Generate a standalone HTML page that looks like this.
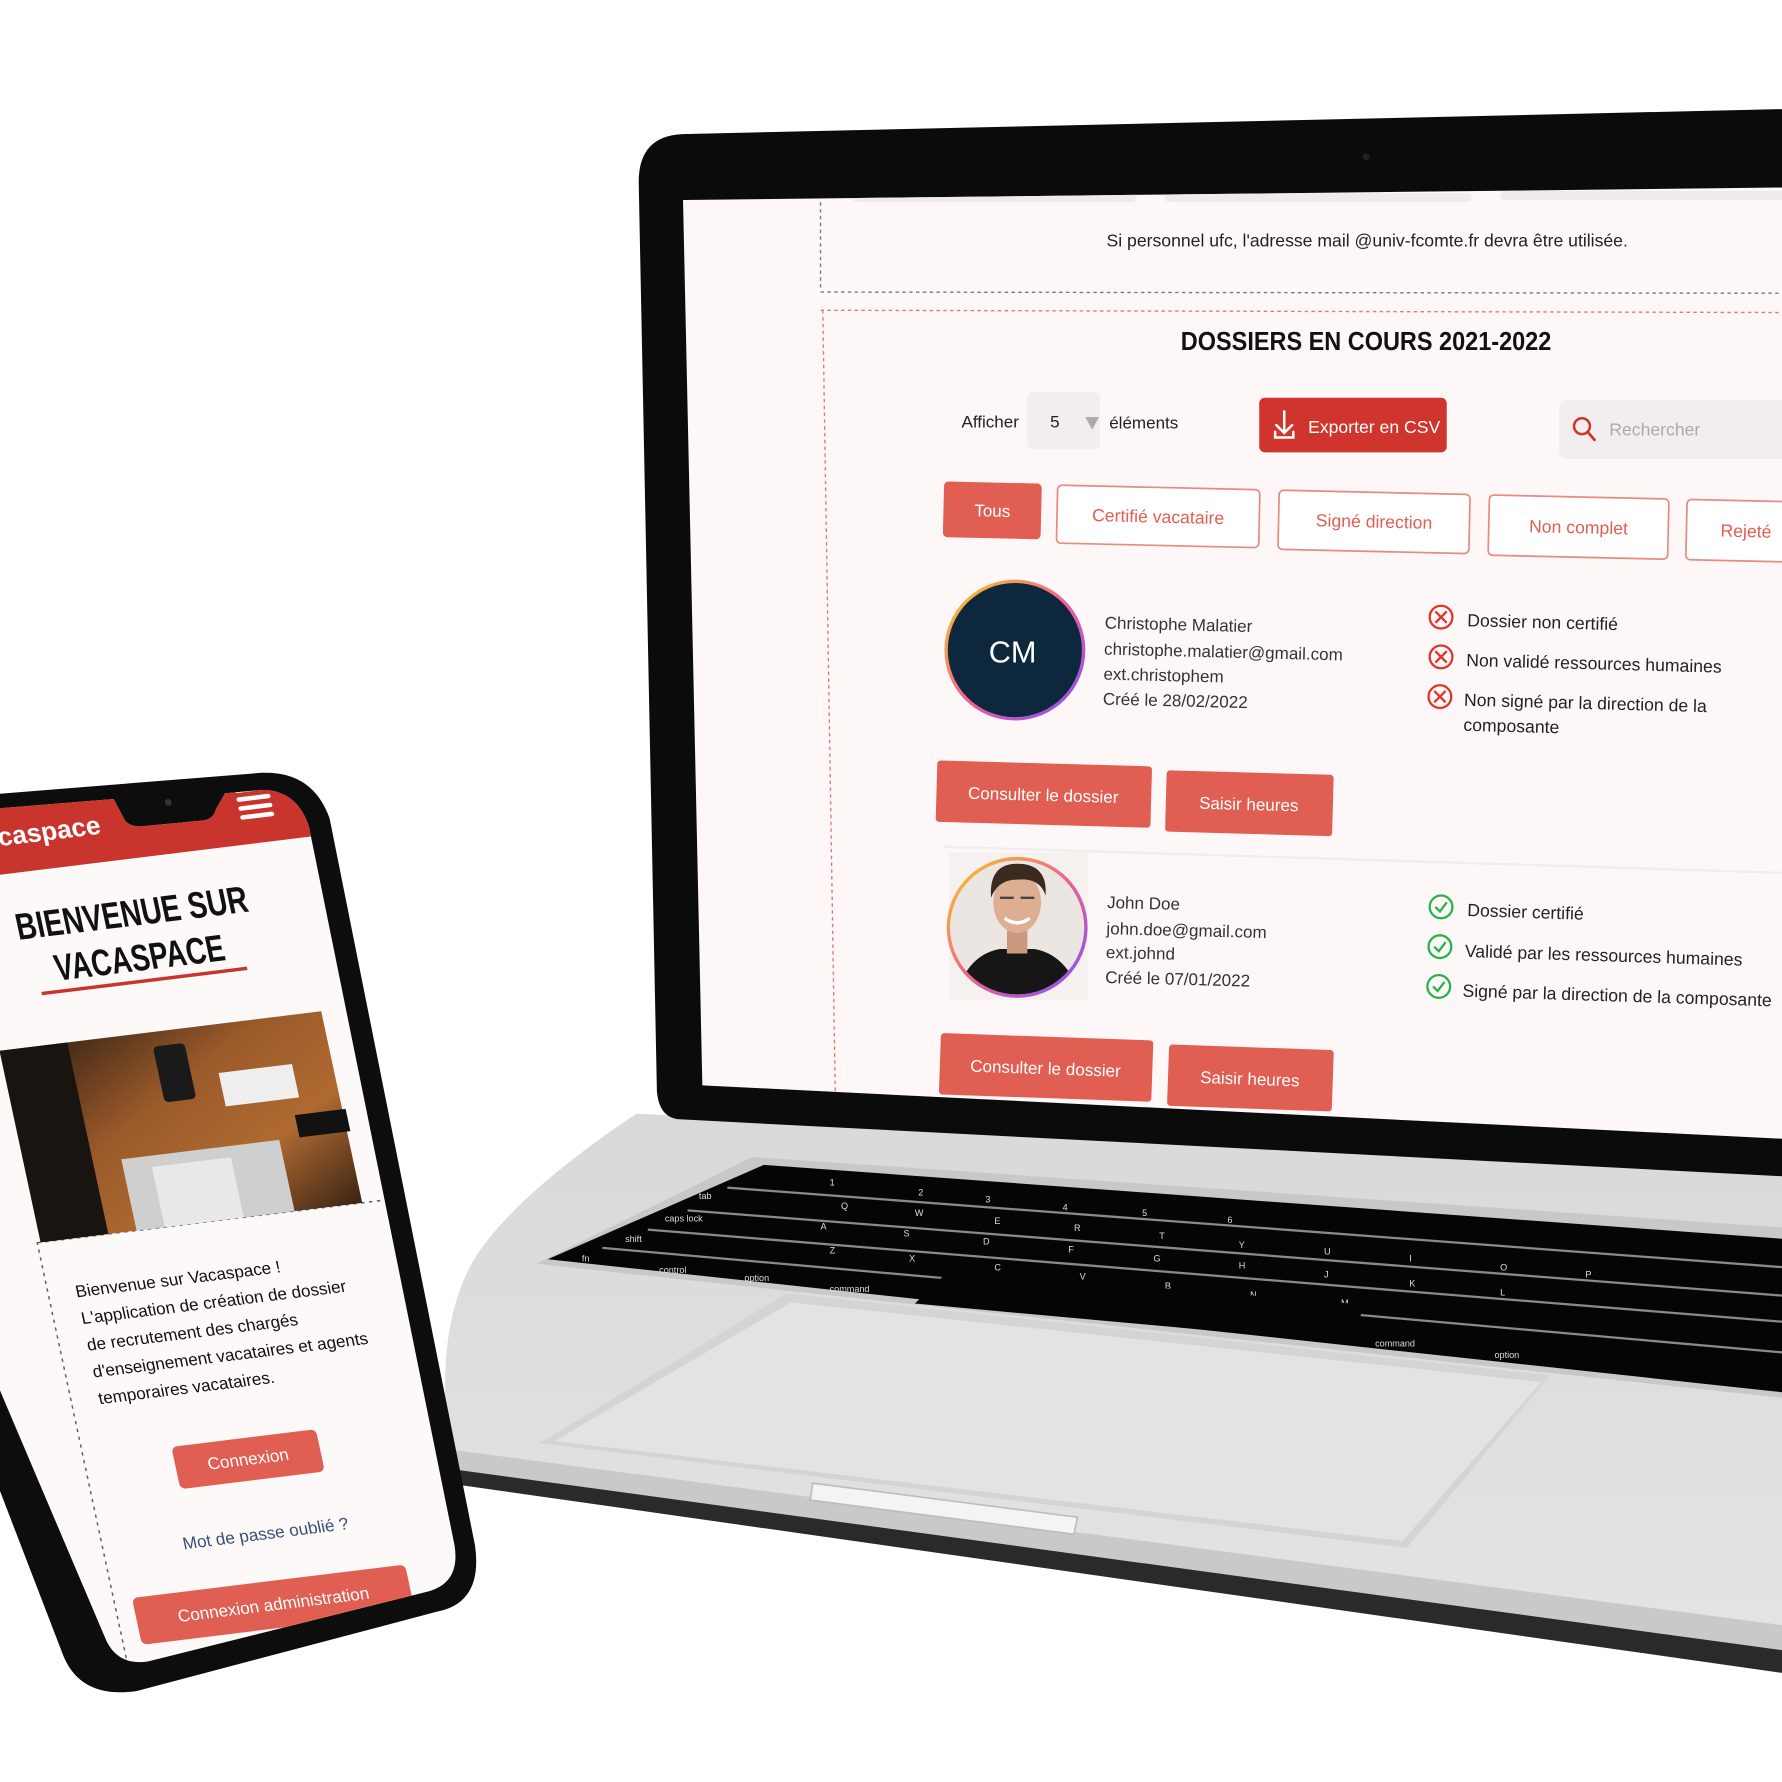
<!DOCTYPE html>
<html><head><meta charset="utf-8"><style>
html,body{margin:0;padding:0;background:#fff;width:1782px;height:1782px;overflow:hidden}
svg{display:block}
text{font-family:"Liberation Sans",sans-serif}
</style></head><body>
<svg width="1782" height="1782" viewBox="0 0 1568 1568" xmlns="http://www.w3.org/2000/svg">
<defs>
<linearGradient id="base" x1="0" y1="0" x2="0" y2="1"><stop offset="0" stop-color="#d9d9d9"/><stop offset="1" stop-color="#e4e4e4"/></linearGradient>
<linearGradient id="ring" x1="0" y1="0" x2="1" y2="1"><stop offset="0" stop-color="#f5d020"/><stop offset="0.5" stop-color="#f06292"/><stop offset="1" stop-color="#7c4dff"/></linearGradient>
<linearGradient id="photo" x1="0" y1="0" x2="1" y2="1"><stop offset="0" stop-color="#2a1a12"/><stop offset="0.4" stop-color="#9a5a2a"/><stop offset="0.7" stop-color="#b06a30"/><stop offset="1" stop-color="#3a2415"/></linearGradient>
<clipPath id="phoneclip"><path d="M-10 712 L100 703 L110 722 Q115 728 125 727 L178 722 Q188 721 190 712 L198 698 L232 695 Q262 696 272 728 L400 1360 Q405 1392 378 1400 L130 1462 Q102 1466 92 1440 L-10 1200 Z"/></clipPath>
<clipPath id="scrclip"><path d="M601 176 L1568 165 L1568 1002 L618 955 Z"/></clipPath>
</defs>
<rect width="1568" height="1568" fill="#fff"/>

<!-- LAPTOP BASE -->
<path d="M560 980 L1568 1028 L1568 1470 L400 1302 L395 1275 Q380 1150 430 1090 Q470 1040 560 980 Z" fill="url(#base)"/>
<path d="M400 1290 L1568 1450 L1568 1472 L400 1306 Z" fill="#2a2a2a"/>
<path d="M400 1276 L1568 1430 L1568 1452 L400 1293 Z" fill="#c9c9c9"/>
<path d="M662 1018 L1568 1080 L1568 1230 L472 1112 Z" fill="#c8c8c8"/>
<path d="M672 1025 L1568 1090 L1568 1225 L482 1108 Z" fill="#050505"/>
<g stroke="#8a8a8a" stroke-width="2" fill="none">
<path d="M640 1045 L1568 1115"/><path d="M605 1065 L1568 1140"/><path d="M570 1082 L1568 1163"/><path d="M530 1098 L1568 1190"/>
</g>
<g fill="#ddd" font-size="8">
<text x="730" y="1043">1</text><text x="808" y="1052">2</text><text x="867" y="1058">3</text><text x="935" y="1065">4</text><text x="1005" y="1070">5</text><text x="1080" y="1076">6</text>
<text x="740" y="1064">Q</text><text x="805" y="1070">W</text><text x="875" y="1077">E</text><text x="945" y="1083">R</text><text x="1020" y="1090">T</text><text x="1090" y="1098">Y</text><text x="1165" y="1104">U</text><text x="1240" y="1110">I</text><text x="1320" y="1118">O</text><text x="1395" y="1124">P</text>
<text x="722" y="1082">A</text><text x="795" y="1088">S</text><text x="865" y="1095">D</text><text x="940" y="1102">F</text><text x="1015" y="1110">G</text><text x="1090" y="1116">H</text><text x="1165" y="1124">J</text><text x="1240" y="1132">K</text><text x="1320" y="1140">L</text>
<text x="730" y="1103">Z</text><text x="800" y="1110">X</text><text x="875" y="1118">C</text><text x="950" y="1126">V</text><text x="1025" y="1134">B</text><text x="1100" y="1142">N</text><text x="1180" y="1149">M</text>
<text x="615" y="1055">tab</text><text x="585" y="1075">caps lock</text><text x="550" y="1093">shift</text><text x="512" y="1110">fn</text><text x="580" y="1120">control</text><text x="655" y="1127">option</text><text x="730" y="1137">command</text><text x="1210" y="1185">command</text><text x="1315" y="1195">option</text>
</g>
<path d="M835 1118 L1200 1148 L1190 1182 L805 1147 Z" fill="#050505"/>
<path d="M692 1138 L1364 1210 L1238 1362 L475 1270 Z" fill="#d4d4d4"/>
<path d="M696 1146 L1356 1216 L1234 1356 L488 1268 Z" fill="#e3e3e3"/>
<path d="M715 1305 L948 1335 L945 1350 L713 1320 Z" fill="#f4f4f4" stroke="#bdbdbd" stroke-width="1.5"/>

<!-- LAPTOP LID -->
<path d="M600 118 L1568 96 L1568 1035 L600 985 Q580 985 578 960 L562 160 Q562 120 600 118 Z" fill="#0b0b0b"/>
<circle cx="1202" cy="138" r="3" fill="#222"/>
<path d="M601 176 L1568 165 L1568 1002 L618 955 Z" fill="#fdf8f7"/>

<g clip-path="url(#scrclip)">
<g fill="#f0ebea"><rect x="750" y="170" width="250" height="8" rx="4"/><rect x="1025" y="170" width="270" height="8" rx="4"/><rect x="1320" y="168" width="250" height="8" rx="4"/></g>
<line x1="722" y1="178" x2="722" y2="256" stroke="#6b7890" stroke-width="1.2" stroke-dasharray="3 3"/>
<line x1="722" y1="257" x2="1568" y2="258" stroke="#6b7890" stroke-width="1.2" stroke-dasharray="3 3"/>
<line x1="722" y1="273" x2="1568" y2="275" stroke="#e07870" stroke-width="1.2" stroke-dasharray="3 3"/>
<line x1="724" y1="273" x2="735" y2="965" stroke="#e07870" stroke-width="1.2" stroke-dasharray="3 3"/>
<text x="1203" y="217" font-size="15.5" fill="#222" text-anchor="middle">Si personnel ufc, l'adresse mail @univ-fcomte.fr devra être utilisée.</text>
<text x="1202" y="308" font-size="23" font-weight="bold" fill="#111" text-anchor="middle" textLength="326" lengthAdjust="spacingAndGlyphs">DOSSIERS EN COURS 2021-2022</text>

<text x="846" y="376" font-size="15" fill="#222">Afficher</text>
<rect x="904" y="345" width="64" height="50" rx="5" fill="#f2eeed"/>
<text x="924" y="376" font-size="15" fill="#222">5</text>
<path d="M955 367 L967 367 L961 378 Z" fill="#aaa"/>
<text x="976" y="377" font-size="15" fill="#222">éléments</text>

<rect x="1108" y="350" width="165" height="48" rx="5" fill="#d0352d"/>
<path d="M1130 362 L1130 380 M1123 374 L1130 381 L1137 374 M1122 380 L1122 385 L1138 385 L1138 380" stroke="#fff" stroke-width="2.2" fill="none" stroke-linecap="round"/>
<text x="1151" y="381" font-size="15.5" fill="#fff">Exporter en CSV</text>

<rect x="1372" y="352" width="220" height="52" rx="6" fill="#f2eeed"/>
<circle cx="1392" cy="375" r="7" stroke="#d0352d" stroke-width="2.2" fill="none"/>
<path d="M1397 380 L1403 387" stroke="#d0352d" stroke-width="2.4" stroke-linecap="round"/>
<text x="1416" y="383" font-size="15.5" fill="#aaa">Rechercher</text>

<g transform="rotate(1.3 1200 460)">
<rect x="830" y="432" width="86" height="49" rx="4" fill="#e05e52"/>
<text x="873" y="462" font-size="15" fill="#fff" text-anchor="middle">Tous</text>
<rect x="930" y="433" width="178" height="51" rx="4" fill="#fff" stroke="#e88a82" stroke-width="1.5"/>
<text x="1019" y="464" font-size="15.5" fill="#e05e52" text-anchor="middle">Certifié vacataire</text>
<rect x="1125" y="433" width="168" height="52" rx="4" fill="#fff" stroke="#e88a82" stroke-width="1.5"/>
<text x="1209" y="464" font-size="15.5" fill="#e05e52" text-anchor="middle">Signé direction</text>
<rect x="1310" y="433" width="158" height="53" rx="4" fill="#fff" stroke="#e88a82" stroke-width="1.5"/>
<text x="1389" y="465" font-size="15.5" fill="#e05e52" text-anchor="middle">Non complet</text>
<rect x="1484" y="433" width="110" height="53" rx="4" fill="#fff" stroke="#e88a82" stroke-width="1.5"/>
<text x="1514" y="465" font-size="15.5" fill="#e05e52">Rejeté</text>
</g>

<circle cx="893" cy="572" r="62" fill="url(#ring)"/>
<circle cx="893" cy="572" r="59" fill="#0d283d"/>
<text x="891" y="583" font-size="27" fill="#fff" text-anchor="middle">CM</text>
<g transform="rotate(1.4 972 550)" font-size="15" fill="#333">
<text x="972" y="553">Christophe Malatier</text>
<text x="972" y="576">christophe.malatier@gmail.com</text>
<text x="972" y="598">ext.christophem</text>
<text x="972" y="620">Créé le 28/02/2022</text>
</g>
<g fill="none" stroke="#e0332a" stroke-width="2">
<circle cx="1268" cy="543" r="10"/><path d="M1263 538 L1273 548 M1273 538 L1263 548"/>
<circle cx="1268" cy="578" r="10"/><path d="M1263 573 L1273 583 M1273 573 L1263 583"/>
<circle cx="1267" cy="613" r="10"/><path d="M1262 608 L1272 618 M1272 608 L1262 618"/>
</g>
<g transform="rotate(1.5 1290 550)" font-size="15.5" fill="#222">
<text x="1291" y="551">Dossier non certifié</text>
<text x="1291" y="586">Non validé ressources humaines</text>
<text x="1290" y="621">Non signé par la direction de la</text>
<text x="1290" y="643">composante</text>
</g>
<g transform="rotate(1.6 1000 700)">
<rect x="824" y="674" width="189" height="54" rx="3" fill="#e05e52"/>
<text x="918" y="707" font-size="15" fill="#fff" text-anchor="middle">Consulter le dossier</text>
<rect x="1026" y="677" width="147" height="54" rx="3" fill="#e05e52"/>
<text x="1099" y="710" font-size="15" fill="#fff" text-anchor="middle">Saisir heures</text>
</g>
<line x1="830" y1="745" x2="1568" y2="768" stroke="#eee" stroke-width="2"/>

<rect x="835" y="750" width="122" height="130" fill="#f4f1ee"/>
<circle cx="895" cy="816" r="62" fill="url(#ring)"/>
<circle cx="895" cy="816" r="59" fill="#ebe6e1"/>
<clipPath id="face"><circle cx="895" cy="816" r="59"/></clipPath>
<g clip-path="url(#face)">
<path d="M840 880 Q850 840 880 835 L910 835 Q940 840 952 880 Z" fill="#161616"/>
<rect x="886" y="815" width="18" height="24" fill="#c99a80"/>
<ellipse cx="895" cy="794" rx="21" ry="27" fill="#dcae92"/>
<path d="M872 790 Q870 760 895 760 Q922 760 920 788 Q915 772 895 774 Q878 774 872 790 Z" fill="#3b2a20"/>
<path d="M880 790 h12 M898 790 h12" stroke="#444" stroke-width="2"/>
<path d="M884 808 Q895 816 906 808" stroke="#fff" stroke-width="3" fill="none"/>
</g>
<g transform="rotate(1.4 974 800)" font-size="15" fill="#333">
<text x="974" y="799">John Doe</text>
<text x="974" y="822">john.doe@gmail.com</text>
<text x="974" y="843">ext.johnd</text>
<text x="974" y="865">Créé le 07/01/2022</text>
</g>
<g fill="none" stroke="#27b24a" stroke-width="2">
<circle cx="1268" cy="798" r="10"/><path d="M1263 798 L1267 802 L1273 794"/>
<circle cx="1267" cy="833" r="10"/><path d="M1262 833 L1266 837 L1272 829"/>
<circle cx="1266" cy="868" r="10"/><path d="M1261 868 L1265 872 L1271 864"/>
</g>
<g transform="rotate(1.8 1290 805)" font-size="15.5" fill="#222">
<text x="1291" y="806">Dossier certifié</text>
<text x="1290" y="842">Validé par les ressources humaines</text>
<text x="1289" y="877">Signé par la direction de la composante</text>
</g>
<g transform="rotate(2 1000 940)">
<rect x="827" y="915" width="187" height="54" rx="3" fill="#e05e52"/>
<text x="920" y="948" font-size="15" fill="#fff" text-anchor="middle">Consulter le dossier</text>
<rect x="1028" y="918" width="145" height="54" rx="3" fill="#e05e52"/>
<text x="1100" y="951" font-size="15" fill="#fff" text-anchor="middle">Saisir heures</text>
</g>
</g>

<!-- PHONE -->
<path d="M-20 700 L230 680 Q275 678 290 720 L418 1360 Q425 1410 385 1418 L120 1488 Q70 1495 55 1455 L-20 1260 Z" fill="#0d0d0d"/>
<g clip-path="url(#phoneclip)">
<rect x="-20" y="680" width="460" height="820" fill="#fcf9f8"/>
<g transform="matrix(0.993,-0.122,0.21,0.98,-30,715)">
<rect x="-200" y="-60" width="600" height="118" fill="#c9342d"/>
<text x="10" y="33" font-size="23" font-weight="bold" fill="#fff">acaspace</text>
<g fill="#fff"><rect x="236" y="8" width="30" height="4" rx="2"/><rect x="236" y="16" width="30" height="4" rx="2"/><rect x="236" y="24" width="30" height="4" rx="2"/><rect x="236" y="32" width="30" height="4" rx="2"/></g>
<text x="22" y="117" font-size="33" font-weight="bold" fill="#111" textLength="205" lengthAdjust="spacingAndGlyphs">BIENVENUE SUR</text>
<text x="48" y="157" font-size="33" font-weight="bold" fill="#111" textLength="150" lengthAdjust="spacingAndGlyphs">VACASPACE</text>
<rect x="32" y="165" width="182" height="3" fill="#c9342d"/>
<rect x="-18" y="384" width="330" height="420" fill="none" stroke="#55607a" stroke-width="1.3" stroke-dasharray="3 4"/>
<rect x="-15" y="212" width="285" height="172" fill="url(#photo)"/>
<rect x="70" y="320" width="140" height="64" fill="#cfcfcf"/>
<rect x="95" y="330" width="70" height="54" fill="#e8e8e8"/>
<rect x="118" y="225" width="28" height="50" rx="4" fill="#1a1a1a"/>
<rect x="170" y="255" width="65" height="30" fill="#eee"/>
<rect x="228" y="300" width="45" height="20" fill="#111"/>
<rect x="-15" y="212" width="60" height="172" fill="#1a1410"/>
<g font-size="15" fill="#111">
<text x="6" y="436">Bienvenue sur Vacaspace !</text>
<text x="6" y="460">L'application de création de dossier</text>
<text x="6" y="484">de recrutement des chargés</text>
<text x="6" y="508">d'enseignement vacataires et agents</text>
<text x="6" y="532">temporaires vacataires.</text>
</g>
<rect x="60" y="577" width="128" height="38" rx="5" fill="#e05e52"/>
<text x="124" y="601" font-size="15" fill="#fff" text-anchor="middle">Connexion</text>
<text x="52" y="668" font-size="15" fill="#3a4e7a">Mot de passe oublié  ?</text>
<rect x="-2" y="705" width="242" height="42" rx="5" fill="#e05e52"/>
<text x="119" y="731" font-size="15" fill="#fff" text-anchor="middle">Connexion administration</text>
</g>
</g>
<path d="M10 706 L100 699 Q108 699 110 710 Q113 724 125 723 L178 718 Q188 717 190 706 L196 695 L10 706 Z" fill="#0d0d0d"/>
<circle cx="148" cy="706" r="3" fill="#333"/>
</svg>
</body></html>
